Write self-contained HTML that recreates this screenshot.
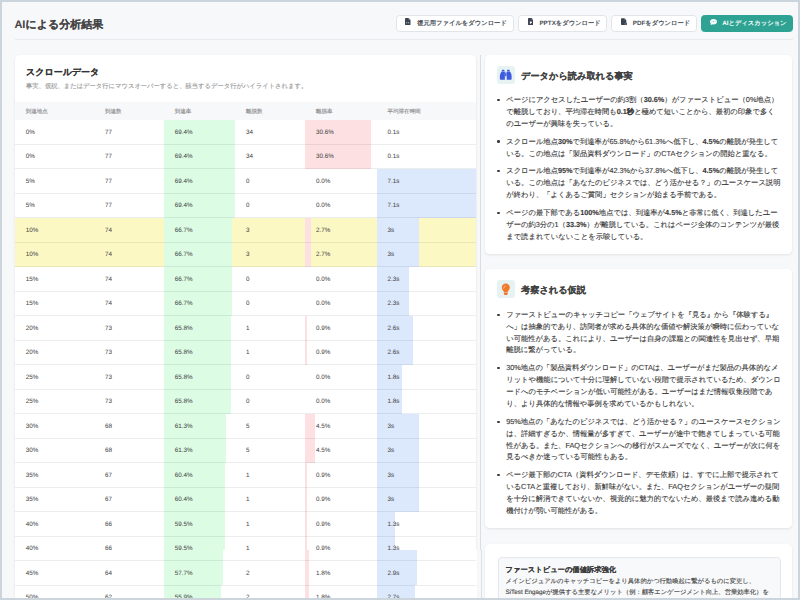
<!DOCTYPE html>
<html lang="ja"><head><meta charset="utf-8">
<style>
*{box-sizing:border-box;margin:0;padding:0}
html,body{width:800px;height:600px;overflow:hidden}
body{font-family:"Liberation Sans",sans-serif;text-rendering:geometricPrecision;-webkit-text-stroke:0.12px currentColor;background:#cdd5dc;position:relative;color:#333}
.page{position:absolute;left:0;top:0;width:800px;height:600px;background:#f7f8fa}
.frame{position:absolute;left:0;top:0;width:800px;height:600px;border:2px solid #cdd5dc}
.abs{position:absolute}
.title{position:absolute;left:14.4px;top:17.8px;font-size:11px;font-weight:bold;color:#444;line-height:14px;white-space:nowrap}
.hline{position:absolute;left:15px;width:778px;top:39px;height:1px;background:#e8eaed}
.btn{position:absolute;top:14.6px;height:17px;background:#fff;border:1px solid #e1e4e8;border-radius:3.5px;font-size:6.3px;font-weight:bold;color:#4a4f57;white-space:nowrap;line-height:14.7px}
.btn .fi{position:absolute;left:8.7px;top:2.6px;width:5.5px;height:7.1px}
.btn span{position:absolute;top:1.1px}
.btn.teal{background:#2ea393;border-color:#2ea393;color:#fff}
.card{position:absolute;background:#fff;border-radius:4.5px;box-shadow:0 1px 2.5px rgba(0,0,0,.09)}
.ctitle{position:absolute;font-size:9px;font-weight:bold;color:#333;white-space:nowrap;line-height:12px}
.csub{position:absolute;font-size:6.3px;color:#9a9a9a;white-space:nowrap;line-height:8px}
.thbg{position:absolute;left:15px;width:461.3px;top:101.7px;height:18.1px;background:#f7f8fa}
.th{position:absolute;top:107.7px;font-size:5.5px;line-height:8px;color:#8a8a8a;white-space:nowrap}
.hl{position:absolute;left:15px;width:461.3px;background:#fcf8c4}
.bar{position:absolute}
.bar.g{background:#dcfce4}
.bar.r{background:#fde0e2}
.bar.b{background:#dce8fb}
.rl{position:absolute;left:15px;width:461.3px;height:1px;background:rgba(0,10,30,.075)}
.td{position:absolute;font-size:6.3px;line-height:8px;margin-top:-3.4px;color:#454545;-webkit-text-stroke:0.03px currentColor;white-space:nowrap}
.divider{position:absolute;left:479.5px;top:55px;width:1px;height:545px;background:#dadde2}
.ibox{position:absolute;width:18px;height:18px;border-radius:3px;background:#e7f3f3}
.rtitle{position:absolute;font-size:9.2px;font-weight:bold;color:#404040;white-space:nowrap;line-height:12px}
.ln{position:absolute;left:506.2px;font-size:7.3px;line-height:10px;margin-top:-5px;color:#3a3a3a;white-space:nowrap}
.dot{position:absolute;left:497.2px;width:2.4px;height:2.4px;border-radius:50%;background:#3a3a3a}
.inner{position:absolute;left:497.5px;top:556.7px;width:283px;height:80px;background:#f8f9fa;border:1px solid #e5e7ea;border-radius:4px}
.itl{position:absolute;left:505.5px;font-size:7.3px;font-weight:bold;color:#3a3a3a;white-space:nowrap;line-height:10px;margin-top:-5px}
.itx{position:absolute;left:505.5px;font-size:6.3px;color:#444;white-space:nowrap;line-height:9px;margin-top:-4.5px}
.btn{-webkit-text-stroke:0}
.title,.ctitle,.rtitle,.itl{-webkit-text-stroke:0.06px currentColor}
</style></head><body>
<div class="page"></div>
<div class="abs" style="left:0;top:0;width:800px;height:600px">
<div class="title">AIによる分析結果</div>
<div class="hline"></div>

<div class="btn" style="left:395.5px;width:118px"><svg class="fi" viewBox="0 0 10 13"><path d="M1.2 0h5.3L10 3.5v8.3c0 .7-.5 1.2-1.2 1.2H1.2C.5 13 0 12.5 0 11.8V1.2C0 .5.5 0 1.2 0z" fill="#3b4250"/><path d="M6.5 0v2.6c0 .5.4.9.9.9H10z" fill="#8f96a0"/><circle cx="3.2" cy="8.6" r="1" fill="#fff"/><circle cx="6.8" cy="8.6" r="1" fill="#fff"/></svg><span style="left:20.7px">復元用ファイルをダウンロード</span></div>
<div class="btn" style="left:518.3px;width:88.9px"><svg class="fi" viewBox="0 0 10 13"><path d="M1.2 0h5.3L10 3.5v8.3c0 .7-.5 1.2-1.2 1.2H1.2C.5 13 0 12.5 0 11.8V1.2C0 .5.5 0 1.2 0z" fill="#3b4250"/><path d="M6.5 0v2.6c0 .5.4.9.9.9H10z" fill="#8f96a0"/><path d="M3.4 6.6h2.4c.9 0 1.5.6 1.5 1.4s-.6 1.4-1.5 1.4H4.6v1.4H3.4z" fill="#fff"/></svg><span style="left:20.1px">PPTXをダウンロード</span></div>
<div class="btn" style="left:611px;width:86px"><svg class="fi" viewBox="0 0 12 13" style="width:6.3px"><path d="M1.2 0h5.3L10 3.5v8.3c0 .7-.5 1.2-1.2 1.2H1.2C.5 13 0 12.5 0 11.8V1.2C0 .5.5 0 1.2 0z" fill="#3b4250"/><path d="M6.5 0v2.6c0 .5.4.9.9.9H10z" fill="#8f96a0"/><rect x="0" y="6" width="6" height="3.5" fill="#3b4250"/><rect x="6.5" y="8.5" width="5.5" height="4.5" rx="1" fill="#5b6270"/></svg><span style="left:20.7px">PDFをダウンロード</span></div>
<div class="btn teal" style="left:700.7px;width:92.5px"><svg class="fi" viewBox="0 0 12 11" style="left:8.2px;top:3.2px;width:7px;height:6.6px"><path d="M6 0C2.7 0 0 2.1 0 4.7c0 1.2.6 2.3 1.5 3.1L1 10.5l2.8-1.5c.7.2 1.4.3 2.2.3 3.3 0 6-2.1 6-4.7S9.3 0 6 0z" fill="#fff"/><circle cx="3.4" cy="4.7" r=".8" fill="#2ea393"/><circle cx="6" cy="4.7" r=".8" fill="#2ea393"/><circle cx="8.6" cy="4.7" r=".8" fill="#2ea393"/></svg><span style="left:20.5px">AIとディスカッション</span></div>

<div class="card" style="left:15px;top:55px;width:461.3px;height:600px"></div>
<div class="ctitle" style="left:26px;top:66.4px">スクロールデータ</div>
<div class="csub" style="left:26px;top:82.9px">事実、仮説、またはデータ行にマウスオーバーすると、該当するデータ行がハイライトされます。</div>
<div class="thbg"></div>
<div class="th" style="left:25.70px">到達地点</div>
<div class="th" style="left:105.10px">到達数</div>
<div class="th" style="left:174.70px">到達率</div>
<div class="th" style="left:246.00px">離脱数</div>
<div class="th" style="left:316.10px">離脱率</div>
<div class="th" style="left:387.40px">平均滞在時間</div>
<div class="hl" style="top:217.80px;height:24.50px"></div>
<div class="hl" style="top:242.30px;height:24.50px"></div>
<div class="bar g" style="left:164px;top:119.80px;height:24.50px;width:71.30px"></div>
<div class="bar r" style="left:305.4px;top:119.80px;height:24.50px;width:65.52px"></div>
<div class="bar g" style="left:164px;top:144.30px;height:24.50px;width:71.30px"></div>
<div class="bar r" style="left:305.4px;top:144.30px;height:24.50px;width:65.52px"></div>
<div class="bar g" style="left:164px;top:168.80px;height:24.50px;width:71.30px"></div>
<div class="bar b" style="left:376.7px;top:168.80px;height:24.50px;width:99.60px"></div>
<div class="bar g" style="left:164px;top:193.30px;height:24.50px;width:71.30px"></div>
<div class="bar b" style="left:376.7px;top:193.30px;height:24.50px;width:99.60px"></div>
<div class="bar g" style="left:164px;top:217.80px;height:24.50px;width:67.93px"></div>
<div class="bar r" style="left:305.4px;top:217.80px;height:24.50px;width:5.78px"></div>
<div class="bar b" style="left:376.7px;top:217.80px;height:24.50px;width:42.08px"></div>
<div class="bar g" style="left:164px;top:242.30px;height:24.50px;width:67.93px"></div>
<div class="bar r" style="left:305.4px;top:242.30px;height:24.50px;width:5.78px"></div>
<div class="bar b" style="left:376.7px;top:242.30px;height:24.50px;width:42.08px"></div>
<div class="bar g" style="left:164px;top:266.80px;height:24.50px;width:67.93px"></div>
<div class="bar b" style="left:376.7px;top:266.80px;height:24.50px;width:32.26px"></div>
<div class="bar g" style="left:164px;top:291.30px;height:24.50px;width:67.93px"></div>
<div class="bar b" style="left:376.7px;top:291.30px;height:24.50px;width:32.26px"></div>
<div class="bar g" style="left:164px;top:315.80px;height:24.50px;width:67.00px"></div>
<div class="bar r" style="left:305.4px;top:315.80px;height:24.50px;width:1.93px"></div>
<div class="bar b" style="left:376.7px;top:315.80px;height:24.50px;width:36.47px"></div>
<div class="bar g" style="left:164px;top:340.30px;height:24.50px;width:67.00px"></div>
<div class="bar r" style="left:305.4px;top:340.30px;height:24.50px;width:1.93px"></div>
<div class="bar b" style="left:376.7px;top:340.30px;height:24.50px;width:36.47px"></div>
<div class="bar g" style="left:164px;top:364.80px;height:24.50px;width:67.00px"></div>
<div class="bar b" style="left:376.7px;top:364.80px;height:24.50px;width:25.25px"></div>
<div class="bar g" style="left:164px;top:389.30px;height:24.50px;width:67.00px"></div>
<div class="bar b" style="left:376.7px;top:389.30px;height:24.50px;width:25.25px"></div>
<div class="bar g" style="left:164px;top:413.80px;height:24.50px;width:62.38px"></div>
<div class="bar r" style="left:305.4px;top:413.80px;height:24.50px;width:9.64px"></div>
<div class="bar b" style="left:376.7px;top:413.80px;height:24.50px;width:42.08px"></div>
<div class="bar g" style="left:164px;top:438.30px;height:24.50px;width:62.38px"></div>
<div class="bar r" style="left:305.4px;top:438.30px;height:24.50px;width:9.64px"></div>
<div class="bar b" style="left:376.7px;top:438.30px;height:24.50px;width:42.08px"></div>
<div class="bar g" style="left:164px;top:462.80px;height:24.50px;width:61.45px"></div>
<div class="bar r" style="left:305.4px;top:462.80px;height:24.50px;width:1.93px"></div>
<div class="bar b" style="left:376.7px;top:462.80px;height:24.50px;width:42.08px"></div>
<div class="bar g" style="left:164px;top:487.30px;height:24.50px;width:61.45px"></div>
<div class="bar r" style="left:305.4px;top:487.30px;height:24.50px;width:1.93px"></div>
<div class="bar b" style="left:376.7px;top:487.30px;height:24.50px;width:42.08px"></div>
<div class="bar g" style="left:164px;top:511.80px;height:24.50px;width:60.53px"></div>
<div class="bar r" style="left:305.4px;top:511.80px;height:24.50px;width:1.93px"></div>
<div class="bar b" style="left:376.7px;top:511.80px;height:24.50px;width:18.24px"></div>
<div class="bar g" style="left:164px;top:536.30px;height:13.70px;width:60.53px"></div>
<div class="bar r" style="left:305.4px;top:536.30px;height:13.70px;width:1.93px"></div>
<div class="bar b" style="left:376.7px;top:536.30px;height:13.70px;width:18.24px"></div>
<div class="bar g" style="left:164px;top:549.50px;height:35.80px;width:58.68px"></div>
<div class="bar r" style="left:305.4px;top:549.50px;height:35.80px;width:3.85px"></div>
<div class="bar b" style="left:376.7px;top:549.50px;height:35.80px;width:40.68px"></div>
<div class="bar g" style="left:164px;top:585.30px;height:24.50px;width:56.83px"></div>
<div class="bar r" style="left:305.4px;top:585.30px;height:24.50px;width:3.85px"></div>
<div class="bar b" style="left:376.7px;top:585.30px;height:24.50px;width:37.88px"></div>
<div class="rl" style="top:143.80px"></div>
<div class="rl" style="top:168.30px"></div>
<div class="rl" style="top:192.80px"></div>
<div class="rl" style="top:217.30px"></div>
<div class="rl" style="top:241.80px"></div>
<div class="rl" style="top:266.30px"></div>
<div class="rl" style="top:290.80px"></div>
<div class="rl" style="top:315.30px"></div>
<div class="rl" style="top:339.80px"></div>
<div class="rl" style="top:364.30px"></div>
<div class="rl" style="top:388.80px"></div>
<div class="rl" style="top:413.30px"></div>
<div class="rl" style="top:437.80px"></div>
<div class="rl" style="top:462.30px"></div>
<div class="rl" style="top:486.80px"></div>
<div class="rl" style="top:511.30px"></div>
<div class="rl" style="top:535.80px"></div>
<div class="rl" style="top:560.30px"></div>
<div class="rl" style="top:584.80px"></div>
<div class="rl" style="top:609.30px"></div>
<div class="td" style="left:25.70px;top:132.05px">0%</div>
<div class="td" style="left:105.10px;top:132.05px">77</div>
<div class="td" style="left:174.70px;top:132.05px">69.4%</div>
<div class="td" style="left:246.00px;top:132.05px">34</div>
<div class="td" style="left:316.10px;top:132.05px">30.6%</div>
<div class="td" style="left:387.40px;top:132.05px">0.1s</div>
<div class="td" style="left:25.70px;top:156.55px">0%</div>
<div class="td" style="left:105.10px;top:156.55px">77</div>
<div class="td" style="left:174.70px;top:156.55px">69.4%</div>
<div class="td" style="left:246.00px;top:156.55px">34</div>
<div class="td" style="left:316.10px;top:156.55px">30.6%</div>
<div class="td" style="left:387.40px;top:156.55px">0.1s</div>
<div class="td" style="left:25.70px;top:181.05px">5%</div>
<div class="td" style="left:105.10px;top:181.05px">77</div>
<div class="td" style="left:174.70px;top:181.05px">69.4%</div>
<div class="td" style="left:246.00px;top:181.05px">0</div>
<div class="td" style="left:316.10px;top:181.05px">0.0%</div>
<div class="td" style="left:387.40px;top:181.05px">7.1s</div>
<div class="td" style="left:25.70px;top:205.55px">5%</div>
<div class="td" style="left:105.10px;top:205.55px">77</div>
<div class="td" style="left:174.70px;top:205.55px">69.4%</div>
<div class="td" style="left:246.00px;top:205.55px">0</div>
<div class="td" style="left:316.10px;top:205.55px">0.0%</div>
<div class="td" style="left:387.40px;top:205.55px">7.1s</div>
<div class="td" style="left:25.70px;top:230.05px">10%</div>
<div class="td" style="left:105.10px;top:230.05px">74</div>
<div class="td" style="left:174.70px;top:230.05px">66.7%</div>
<div class="td" style="left:246.00px;top:230.05px">3</div>
<div class="td" style="left:316.10px;top:230.05px">2.7%</div>
<div class="td" style="left:387.40px;top:230.05px">3s</div>
<div class="td" style="left:25.70px;top:254.55px">10%</div>
<div class="td" style="left:105.10px;top:254.55px">74</div>
<div class="td" style="left:174.70px;top:254.55px">66.7%</div>
<div class="td" style="left:246.00px;top:254.55px">3</div>
<div class="td" style="left:316.10px;top:254.55px">2.7%</div>
<div class="td" style="left:387.40px;top:254.55px">3s</div>
<div class="td" style="left:25.70px;top:279.05px">15%</div>
<div class="td" style="left:105.10px;top:279.05px">74</div>
<div class="td" style="left:174.70px;top:279.05px">66.7%</div>
<div class="td" style="left:246.00px;top:279.05px">0</div>
<div class="td" style="left:316.10px;top:279.05px">0.0%</div>
<div class="td" style="left:387.40px;top:279.05px">2.3s</div>
<div class="td" style="left:25.70px;top:303.55px">15%</div>
<div class="td" style="left:105.10px;top:303.55px">74</div>
<div class="td" style="left:174.70px;top:303.55px">66.7%</div>
<div class="td" style="left:246.00px;top:303.55px">0</div>
<div class="td" style="left:316.10px;top:303.55px">0.0%</div>
<div class="td" style="left:387.40px;top:303.55px">2.3s</div>
<div class="td" style="left:25.70px;top:328.05px">20%</div>
<div class="td" style="left:105.10px;top:328.05px">73</div>
<div class="td" style="left:174.70px;top:328.05px">65.8%</div>
<div class="td" style="left:246.00px;top:328.05px">1</div>
<div class="td" style="left:316.10px;top:328.05px">0.9%</div>
<div class="td" style="left:387.40px;top:328.05px">2.6s</div>
<div class="td" style="left:25.70px;top:352.55px">20%</div>
<div class="td" style="left:105.10px;top:352.55px">73</div>
<div class="td" style="left:174.70px;top:352.55px">65.8%</div>
<div class="td" style="left:246.00px;top:352.55px">1</div>
<div class="td" style="left:316.10px;top:352.55px">0.9%</div>
<div class="td" style="left:387.40px;top:352.55px">2.6s</div>
<div class="td" style="left:25.70px;top:377.05px">25%</div>
<div class="td" style="left:105.10px;top:377.05px">73</div>
<div class="td" style="left:174.70px;top:377.05px">65.8%</div>
<div class="td" style="left:246.00px;top:377.05px">0</div>
<div class="td" style="left:316.10px;top:377.05px">0.0%</div>
<div class="td" style="left:387.40px;top:377.05px">1.8s</div>
<div class="td" style="left:25.70px;top:401.55px">25%</div>
<div class="td" style="left:105.10px;top:401.55px">73</div>
<div class="td" style="left:174.70px;top:401.55px">65.8%</div>
<div class="td" style="left:246.00px;top:401.55px">0</div>
<div class="td" style="left:316.10px;top:401.55px">0.0%</div>
<div class="td" style="left:387.40px;top:401.55px">1.8s</div>
<div class="td" style="left:25.70px;top:426.05px">30%</div>
<div class="td" style="left:105.10px;top:426.05px">68</div>
<div class="td" style="left:174.70px;top:426.05px">61.3%</div>
<div class="td" style="left:246.00px;top:426.05px">5</div>
<div class="td" style="left:316.10px;top:426.05px">4.5%</div>
<div class="td" style="left:387.40px;top:426.05px">3s</div>
<div class="td" style="left:25.70px;top:450.55px">30%</div>
<div class="td" style="left:105.10px;top:450.55px">68</div>
<div class="td" style="left:174.70px;top:450.55px">61.3%</div>
<div class="td" style="left:246.00px;top:450.55px">5</div>
<div class="td" style="left:316.10px;top:450.55px">4.5%</div>
<div class="td" style="left:387.40px;top:450.55px">3s</div>
<div class="td" style="left:25.70px;top:475.05px">35%</div>
<div class="td" style="left:105.10px;top:475.05px">67</div>
<div class="td" style="left:174.70px;top:475.05px">60.4%</div>
<div class="td" style="left:246.00px;top:475.05px">1</div>
<div class="td" style="left:316.10px;top:475.05px">0.9%</div>
<div class="td" style="left:387.40px;top:475.05px">3s</div>
<div class="td" style="left:25.70px;top:499.55px">35%</div>
<div class="td" style="left:105.10px;top:499.55px">67</div>
<div class="td" style="left:174.70px;top:499.55px">60.4%</div>
<div class="td" style="left:246.00px;top:499.55px">1</div>
<div class="td" style="left:316.10px;top:499.55px">0.9%</div>
<div class="td" style="left:387.40px;top:499.55px">3s</div>
<div class="td" style="left:25.70px;top:524.05px">40%</div>
<div class="td" style="left:105.10px;top:524.05px">66</div>
<div class="td" style="left:174.70px;top:524.05px">59.5%</div>
<div class="td" style="left:246.00px;top:524.05px">1</div>
<div class="td" style="left:316.10px;top:524.05px">0.9%</div>
<div class="td" style="left:387.40px;top:524.05px">1.3s</div>
<div class="td" style="left:25.70px;top:548.55px">40%</div>
<div class="td" style="left:105.10px;top:548.55px">66</div>
<div class="td" style="left:174.70px;top:548.55px">59.5%</div>
<div class="td" style="left:246.00px;top:548.55px">1</div>
<div class="td" style="left:316.10px;top:548.55px">0.9%</div>
<div class="td" style="left:387.40px;top:548.55px">1.3s</div>
<div class="td" style="left:25.70px;top:573.05px">45%</div>
<div class="td" style="left:105.10px;top:573.05px">64</div>
<div class="td" style="left:174.70px;top:573.05px">57.7%</div>
<div class="td" style="left:246.00px;top:573.05px">2</div>
<div class="td" style="left:316.10px;top:573.05px">1.8%</div>
<div class="td" style="left:387.40px;top:573.05px">2.9s</div>
<div class="td" style="left:25.70px;top:597.55px">50%</div>
<div class="td" style="left:105.10px;top:597.55px">62</div>
<div class="td" style="left:174.70px;top:597.55px">55.9%</div>
<div class="td" style="left:246.00px;top:597.55px">2</div>
<div class="td" style="left:316.10px;top:597.55px">1.8%</div>
<div class="td" style="left:387.40px;top:597.55px">2.7s</div>

<div class="divider" style="height:494.5px"></div>
<div class="abs" style="left:476px;top:549.5px;width:1px;height:50.5px;background:#fff"></div>
<div class="divider" style="left:480.5px;top:549.5px;height:50.5px"></div>

<div class="card" style="left:485px;top:55px;width:307px;height:198.5px"></div>
<div class="ibox" style="left:496.7px;top:66px"></div>
<svg class="abs" style="left:494px;top:63px;width:24px;height:24px" viewBox="494 63 24 24"><g fill="#3d5be0"><rect x="501.8" y="69.8" width="2.6" height="1.4" rx=".5"/><path d="M501.6 71.6H504.9V79.8H500.9C500.3 79.8 499.9 79.4 499.9 78.8V76.2C499.9 74.6 500.6 73.2 501.6 71.6Z"/><rect x="505.1" y="72.6" width="1.4" height="3.6"/><path d="M506.7 71.6H510C511 73.2 511.6 74.6 511.6 76.2V78.8C511.6 79.4 511.2 79.8 510.6 79.8H506.7Z"/><rect x="507.1" y="69.8" width="2.6" height="1.4" rx=".5"/></g></svg>
<div class="rtitle" style="left:521px;top:69px;margin-top:0.8px">データから読み取れる事実</div>
<div class="dot" style="top:98.80px"></div>
<div class="ln" style="top:100.00px">ページにアクセスしたユーザーの約3割（<b>30.6%</b>）がファーストビュー（0%地点）</div>
<div class="ln" style="top:111.90px">で離脱しており、平均滞在時間も<b>0.1秒</b>と極めて短いことから、最初の印象で多く</div>
<div class="ln" style="top:123.80px">のユーザーが興味を失っている。</div>
<div class="dot" style="top:140.40px"></div>
<div class="ln" style="top:141.60px">スクロール地点<b>30%</b>で到達率が65.8%から61.3%へ低下し、<b>4.5%</b>の離脱が発生して</div>
<div class="ln" style="top:153.50px">いる。この地点は「製品資料ダウンロード」のCTAセクションの開始と重なる。</div>
<div class="dot" style="top:170.10px"></div>
<div class="ln" style="top:171.30px">スクロール地点<b>95%</b>で到達率が42.3%から37.8%へ低下し、<b>4.5%</b>の離脱が発生して</div>
<div class="ln" style="top:183.20px">いる。この地点は「あなたのビジネスでは、どう活かせる？」のユースケース説明</div>
<div class="ln" style="top:195.10px">が終わり、「よくあるご質問」セクションが始まる手前である。</div>
<div class="dot" style="top:211.70px"></div>
<div class="ln" style="top:212.90px">ページの最下部である<b>100%</b>地点では、到達率が<b>4.5%</b>と非常に低く、到達したユー</div>
<div class="ln" style="top:224.80px">ザーの約3分の1（<b>33.3%</b>）が離脱している。これはページ全体のコンテンツが最後</div>
<div class="ln" style="top:236.70px">まで読まれていないことを示唆している。</div>

<div class="card" style="left:485px;top:269.3px;width:307px;height:259px"></div>
<div class="ibox" style="left:496.7px;top:280px"></div>
<svg class="abs" style="left:494px;top:277px;width:24px;height:24px" viewBox="494 277 24 24"><g fill="#f07a2c"><path d="M505.8 283.6C503.6 283.6 501.8 285.3 501.8 287.5C501.8 288.8 502.4 289.7 503.1 290.5C503.6 291.1 503.9 291.7 503.9 292.4H507.7C507.7 291.7 508 291.1 508.5 290.5C509.2 289.7 509.8 288.8 509.8 287.5C509.8 285.3 508 283.6 505.8 283.6Z"/><path d="M503.9 292.8H507.7V293.8C507.7 294.5 507.1 295.1 506.4 295.1H505.2C504.5 295.1 503.9 294.5 503.9 293.8Z"/></g><path d="M503.5 288.3L505.3 285.7" stroke="#fde3cf" stroke-width=".6" stroke-linecap="round"/></svg>
<div class="rtitle" style="left:521px;top:283px;margin-top:1.0px">考察される仮説</div>
<div class="dot" style="top:313.50px"></div>
<div class="ln" style="top:314.70px">ファーストビューのキャッチコピー「ウェブサイトを『見る』から『体験する』</div>
<div class="ln" style="top:326.60px">へ」は抽象的であり、訪問者が求める具体的な価値や解決策が瞬時に伝わっていな</div>
<div class="ln" style="top:338.50px">い可能性がある。これにより、ユーザーは自身の課題との関連性を見出せず、早期</div>
<div class="ln" style="top:350.40px">離脱に繋がっている。</div>
<div class="dot" style="top:367.00px"></div>
<div class="ln" style="top:368.20px">30%地点の「製品資料ダウンロード」のCTAは、ユーザーがまだ製品の具体的なメ</div>
<div class="ln" style="top:380.10px">リットや機能について十分に理解していない段階で提示されているため、ダウンロ</div>
<div class="ln" style="top:392.00px">ードへのモチベーションが低い可能性がある。ユーザーはまだ情報収集段階であ</div>
<div class="ln" style="top:403.90px">り、より具体的な情報や事例を求めているかもしれない。</div>
<div class="dot" style="top:420.50px"></div>
<div class="ln" style="top:421.70px">95%地点の「あなたのビジネスでは、どう活かせる？」のユースケースセクション</div>
<div class="ln" style="top:433.60px">は、詳細すぎるか、情報量が多すぎて、ユーザーが途中で飽きてしまっている可能</div>
<div class="ln" style="top:445.50px">性がある。また、FAQセクションへの移行がスムーズでなく、ユーザーが次に何を</div>
<div class="ln" style="top:457.40px">見るべきか迷っている可能性もある。</div>
<div class="dot" style="top:474.00px"></div>
<div class="ln" style="top:475.20px">ページ最下部のCTA（資料ダウンロード、デモ依頼）は、すでに上部で提示されて</div>
<div class="ln" style="top:487.10px">いるCTAと重複しており、新鮮味がない。また、FAQセクションがユーザーの疑問</div>
<div class="ln" style="top:499.00px">を十分に解消できていないか、視覚的に魅力的でないため、最後まで読み進める動</div>
<div class="ln" style="top:510.90px">機付けが弱い可能性がある。</div>

<div class="card" style="left:485px;top:544px;width:307px;height:100px"></div>
<div class="inner"></div>
<div class="itl" style="top:570px">ファーストビューの価値訴求強化</div>
<div class="itx" style="top:581.7px">メインビジュアルのキャッチコピーをより具体的かつ行動喚起に繋がるものに変更し、</div>
<div class="itx" style="top:592.5px">SiTest Engageが提供する主要なメリット（例：顧客エンゲージメント向上、営業効率化）を</div>
</div>
<div class="frame"></div>
</body></html>
